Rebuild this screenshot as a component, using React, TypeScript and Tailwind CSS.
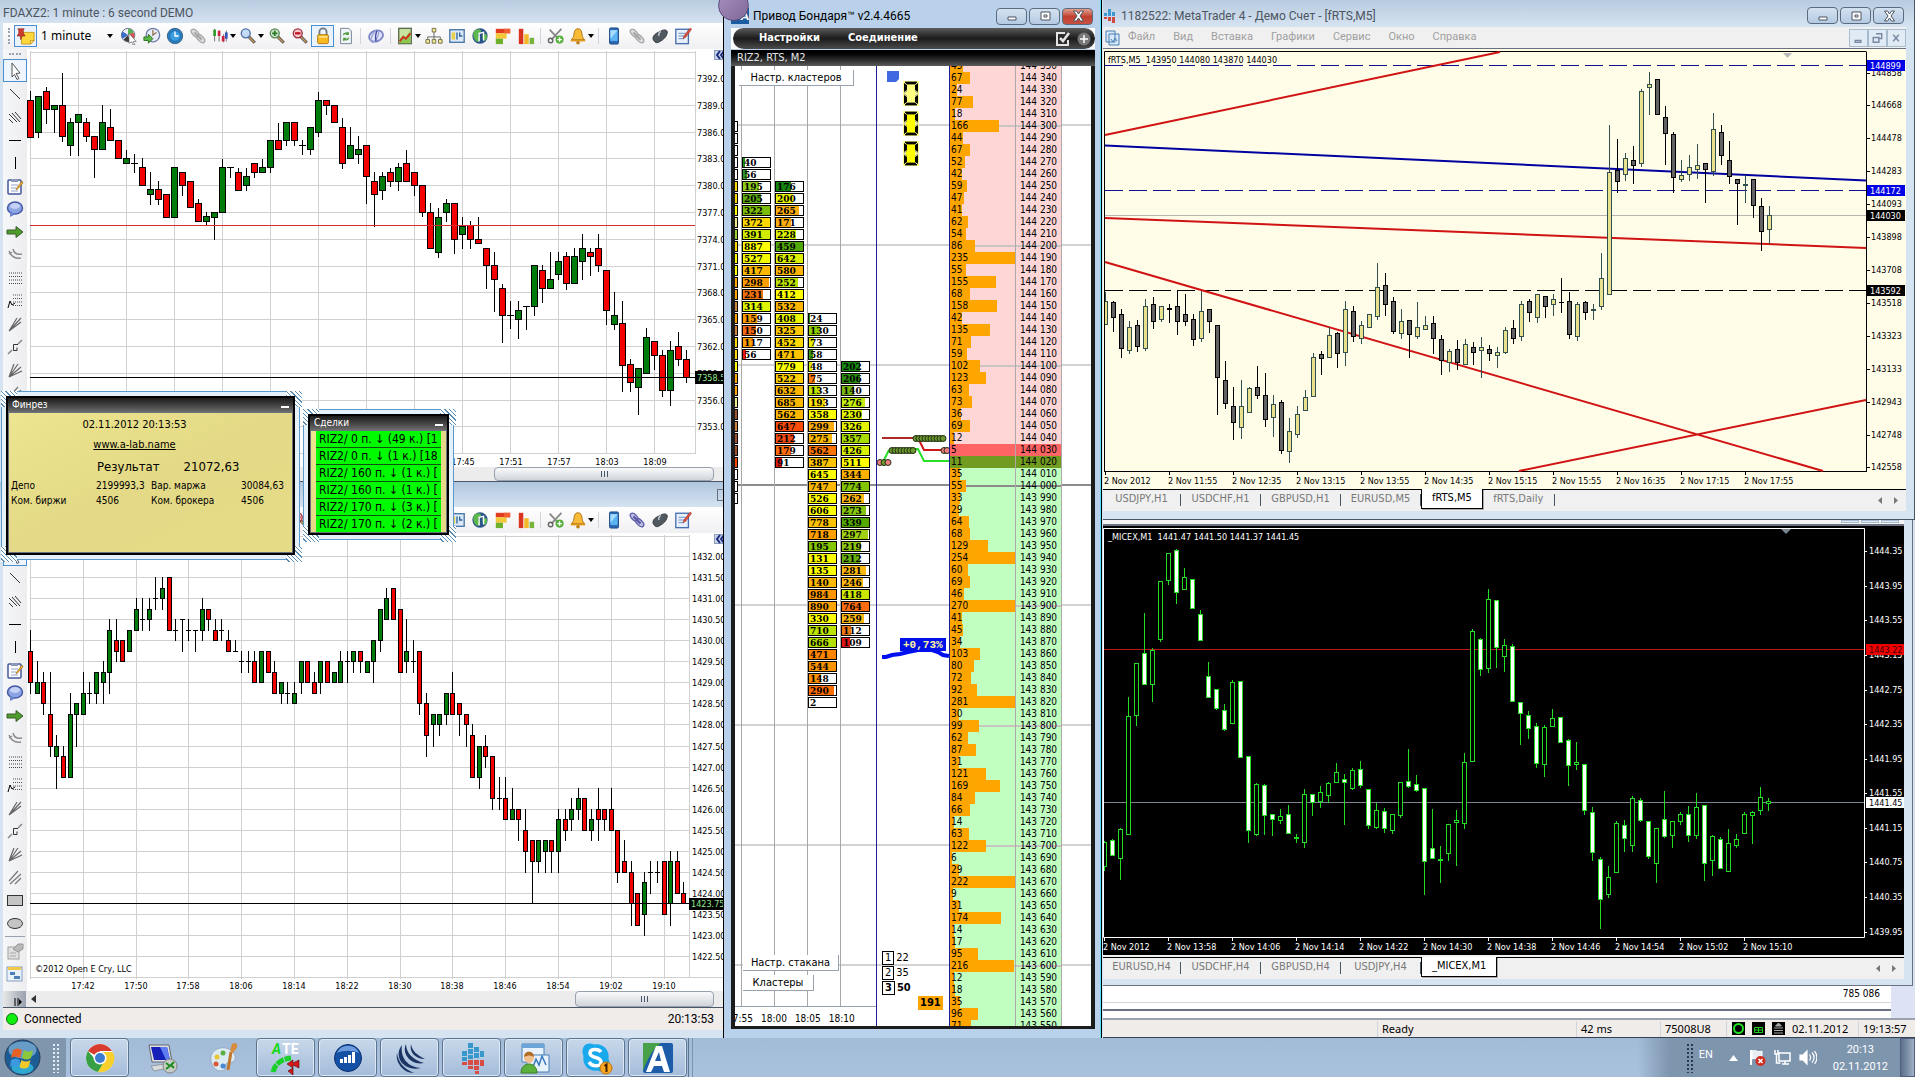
import React from "react";

/* ---------- chart data: high,top,bottom,low,kind ---------- */

const FDAX =
  "91,100,137,137,R 96,96,132,137,G 87,91,109,123,R 105,105,109,132,G 73,105,136,141,R 118,122,145,155,G 114,114,122,155,G 118,122,136,141,R 136,136,149,177,R 105,122,149,149,G 109,127,140,140,R 140,140,158,158,R 150,158,163,163,G 154,163,163,172,D 158,167,185,185,R 172,189,194,204,G 181,189,199,204,R 194,194,217,217,R 167,167,217,217,G 172,172,185,195,R 181,181,207,207,R 199,203,221,221,R 212,216,221,225,G 212,212,217,239,G 159,167,212,212,G 167,167,167,177,D 168,172,190,190,R 168,176,185,190,G 163,163,172,177,R 159,167,172,172,G 140,140,167,172,G 123,140,149,149,R 122,122,140,145,G 122,122,140,145,R 140,145,145,154,D 127,127,149,154,G 92,100,132,136,G 100,100,105,114,R 105,105,122,122,R 118,127,163,168,R 127,145,158,158,G 136,149,154,163,G 145,145,176,203,R 172,181,194,226,R 172,176,190,199,G 168,172,181,186,R 163,167,181,190,G 150,163,181,181,R 172,172,185,195,R 185,185,212,216,R 203,212,248,248,R 208,217,252,257,G 199,203,212,221,G 203,203,239,253,R 217,226,234,248,G 221,225,239,248,R 217,239,243,243,R 248,248,265,288,R 252,265,279,311,R 284,288,315,342,R 301,315,315,328,D 301,310,319,338,G 306,306,306,329,D 265,265,306,315,G 265,270,288,302,R 252,279,288,288,G 252,261,274,279,G 252,256,283,289,R 248,256,283,283,G 234,248,261,279,G 248,252,256,275,R 234,248,265,271,R 270,270,310,324,R 292,315,324,329,G 301,323,365,391,R 359,364,382,391,R 368,368,387,414,G 328,337,373,373,G 341,341,355,369,R 350,355,390,396,R 341,350,390,405,G 332,346,359,365,R 350,359,377,382,R";

/* ticks of 0.25 below 1432.00 */
const ES =
  "7,9,12,13,R 10,12,13,13,G 11,12,14,15,R 11,15,18,19,R 17,18,19,22,G 18,19,21,21,R 13,15,21,21,G 14,14,15,18,G 11,13,15,15,G 12,13,13,14,D 11,11,13,14,G 10,11,12,14,G 6,7,11,13,G 6,8,9,10,R 8,8,10,10,R 7,7,9,9,G 4,5,7,7,G 4,6,6,7,D 4,5,6,7,G 2,4,4,5,D 2,3,4,5,G 2,2,7,7,R 6,7,7,8,D 6,6,6,9,D 6,7,7,8,D 7,7,7,9,D 4,5,7,8,G 5,5,6,7,R 6,7,8,8,R 6,7,7,8,D 7,8,9,9,R 8,9,9,9,D 9,10,10,11,D 9,10,10,11,D 9,10,12,12,R 9,9,12,12,G 9,9,11,11,R 10,11,13,13,R 12,12,13,14,G 12,13,13,14,D 12,13,14,14,G 10,10,12,13,G 10,10,12,12,R 11,12,13,13,R 10,10,12,13,G 10,10,12,12,R 11,11,12,12,G 9,10,12,12,G 9,10,10,12,D 9,9,10,11,G 9,9,10,11,R 10,10,11,11,G 8,8,10,12,G 5,5,8,9,G 3,4,6,6,G 3,3,6,6,R 5,5,11,11,R 6,9,10,11,G 8,10,10,11,D 9,9,14,15,R 13,14,17,19,R 15,15,16,18,G 15,15,16,17,G 13,13,15,16,G 11,13,15,15,R 14,14,15,17,R 15,15,16,18,R 16,17,21,21,R 18,18,21,22,G 17,18,19,20,R 19,19,23,24,R 21,23,23,24,D 21,23,25,25,R 22,24,25,25,G 24,24,25,27,R 24,26,28,30,R 27,27,29,33,R 27,27,29,30,G 27,27,28,30,G 27,27,28,30,R 24,25,28,30,G 24,25,26,27,R 23,24,25,26,G 22,23,24,25,G 23,23,26,26,R 24,25,26,27,G 22,24,25,27,R 24,24,25,26,R 22,24,26,26,R 26,26,30,31,R 27,29,30,30,R 29,30,33,35,R 32,32,35,35,R 30,31,34,36,G 29,30,30,32,D 29,30,30,31,D 29,29,34,34,R 28,29,33,35,G 28,29,32,32,R 31,32,33,33,R";

const FRTS =
  "292,301,324,324,Y 301,302,317,331,K 309,314,348,357,K 321,327,350,353,Y 320,325,346,351,K 299,306,348,350,Y 297,304,321,328,K 306,306,319,321,Y 304,308,309,322,K 291,306,321,334,K 294,314,321,325,K 314,319,339,345,K 291,311,338,341,Y 309,309,321,332,K 325,325,377,414,K 361,380,403,408,K 387,406,422,439,K 380,406,427,438,Y 387,388,412,412,Y 366,387,395,398,K 373,395,419,426,K 395,404,417,436,Y 400,402,450,453,K 418,431,451,462,Y 406,414,434,437,Y 390,397,410,410,Y 353,357,396,396,Y 351,354,358,374,K 327,335,357,357,Y 332,333,353,367,K 301,309,352,365,Y 306,311,336,341,K 321,325,338,343,Y 314,314,327,327,Y 263,287,316,319,Y 273,285,304,315,K 297,301,331,333,K 309,321,333,338,Y 320,320,334,357,K 302,327,336,338,Y 316,325,329,329,Y 316,323,338,353,K 335,339,360,374,K 349,351,362,371,Y 340,349,362,369,K 339,344,364,364,Y 342,347,352,364,K 337,347,350,377,Y 345,349,353,360,K 347,352,355,367,Y 327,330,352,353,Y 320,328,338,343,K 301,304,336,340,Y 299,301,312,321,K 294,294,317,322,Y 296,296,306,317,K 294,299,304,315,Y 278,302,302,312,K 292,301,334,338,K 302,304,336,340,Y 301,302,312,319,K 304,309,310,319,Y 253,278,306,309,Y 125,172,294,294,Y 139,170,181,192,K 153,158,174,180,Y 146,160,165,183,K 89,91,163,166,Y 72,84,87,114,Y 79,79,114,114,K 106,117,133,164,K 132,134,177,192,K 160,175,179,181,Y 155,167,174,180,Y 144,165,169,178,Y 163,163,169,202,K 113,129,171,175,Y 125,132,155,164,K 141,160,176,183,K 179,179,183,224,K 175,184,185,202,Y 179,179,205,217,K 198,206,231,250,K 206,215,229,243,Y";

const MICEX =
  "841,842,866,870,U 839,840,855,855,W 828,829,858,879,U 697,716,834,834,U 663,663,715,725,U 613,653,684,684,W 648,650,684,701,U 581,581,639,641,U 553,553,580,584,U 549,550,592,603,W 568,577,589,589,U 579,579,608,608,W 610,614,640,640,W 662,676,697,697,W 689,689,708,709,W 704,710,729,730,W 680,682,723,723,U 681,681,757,757,W 756,756,830,842,W 783,784,834,835,U 784,785,815,834,W 814,814,819,835,W 809,816,820,823,U 805,814,833,833,W 834,837,838,842,U 789,794,842,847,U 794,794,802,815,W 786,792,801,807,U 782,783,795,802,U 763,772,782,782,U 774,779,782,824,W 768,770,788,789,U 761,769,785,787,W 789,789,825,828,W 803,810,827,828,U 808,811,828,832,W 814,814,830,833,U 782,782,815,817,U 749,781,786,787,W 775,784,790,791,W 788,788,861,894,W 809,848,858,858,W 846,859,860,882,U 824,824,853,860,U 810,820,822,865,U 753,762,823,828,U 629,631,761,761,U 638,639,669,675,W 589,599,668,672,U 600,600,647,667,W 639,645,656,671,U 644,646,701,701,W 702,702,713,744,W 711,715,728,738,W 723,726,763,767,W 725,727,764,776,U 709,718,726,726,U 717,717,742,742,W 739,740,765,785,W 742,762,764,769,U 764,764,810,814,W 807,812,852,860,W 857,859,899,928,W 866,877,894,897,U 821,823,872,872,U 820,825,838,851,W 796,798,845,851,U 798,800,820,821,W 821,821,856,858,W 828,828,863,882,U 791,819,836,837,W 821,821,835,847,U 812,814,821,824,U 806,814,835,841,W 793,807,835,838,U 805,805,863,880,W 835,836,860,875,U 837,839,868,868,W 829,843,871,871,U 834,839,845,847,U 812,814,833,833,U 811,812,815,843,U 787,797,810,814,U 798,801,803,810,U";

const FILL: Record<string, string> = { R: "#f40000", G: "#007c0c", D: "#000", Y: "#e8e08c", K: "#626262", U: "#000", W: "#fff" };
const EDGE: Record<string, string> = { R: "#000", G: "#000", D: "#000", Y: "#2f4f4f", K: "#000", U: "#22dd22", W: "#22dd22" };

type CandleProps = { data: string; x: (i: number) => number; y?: (v: number) => number; half: number };

function Candles({ data, x, y = (v) => v, half }: CandleProps) {
  return (
    <g shapeRendering="crispEdges">
      {data.split(" ").map((row, i) => {
        const p = row.split(",");
        const kind = p[4];
        const [h, t, b, l] = p.slice(0, 4).map((v) => Math.round(y(Number(v))));
        const cx = x(i);
        const w = half * 2 + 1;
        return (
          <g key={i}>
            <rect x={cx} y={h} width={1} height={l - h + 1} fill={EDGE[kind]} />
            <rect x={cx - half} y={t} width={w} height={b - t + 1} fill={EDGE[kind]} />
            {b - t > 1 && <rect x={cx - half + 1} y={t + 1} width={w - 2} height={b - t - 1} fill={FILL[kind]} />}
          </g>
        );
      })}
    </g>
  );
}

const AXIS = "font-['DejaVu_Sans_Condensed','DejaVu_Sans',sans-serif] text-[9px]";
const range = (n: number) => Array.from({ length: n }, (_, i) => i);

/* ---------- left application ---------- */

function FdaxChart() {
  const gy = (i: number) => Math.round(78 + i * 26.8);
  return (
    <svg viewBox="27 49 696 418" preserveAspectRatio="xMinYMin slice" className={`block h-[418px] min-w-0 flex-1 bg-white ${AXIS}`} role="img" aria-label="FDAXZ2">
      <g fill="#d0d0d0" shapeRendering="crispEdges">
        {range(14).map((i) => <rect key={i} x={30} y={gy(i)} width={666} height={1} />)}
        <rect x={30} y={52} width={666} height={1} />
        <rect x={30} y={453} width={666} height={1} />
        {range(14).map((i) => <rect key={i} x={30 + i * 48} y={51} width={1} height={403} />)}
        <rect x={695} y={51} width={1} height={403} />
      </g>
      <Candles data={FDAX} x={(i) => 30 + i * 8} half={3} />
      <rect x={30} y={225} width={665} height={1} fill="#d83030" />
      <rect x={30} y={377} width={665} height={1} fill="#000" />
      {range(14).map((i) => <text key={i} x={697} y={gy(i) + 4}>{(7392 - i * 3).toFixed(1)}</text>)}
      <rect x={695} y={371} width={30} height={13} fill="#000" />
      <text x={697} y={381} fill="#90e890">7358.5</text>
      {["17:45", "17:51", "17:57", "18:03", "18:09"].map((t, i) => <text key={t} x={463 + i * 48} y={465} textAnchor="middle">{t}</text>)}
      <Collapse x={714} y={50} />
    </svg>
  );
}

function Collapse({ x, y }: { x: number; y: number }) {
  return (
    <g>
      <rect x={x + 0.5} y={y + 0.5} width={12} height={9} fill="#c8d4ea" stroke="#8c9cc0" />
      <path d={`M${x + 6} ${y + 1}l-3 4 3 4M${x + 10} ${y + 1}l-3 4 3 4`} fill="none" stroke="#1c2c7c" strokeWidth={2} />
    </g>
  );
}

function EsChart() {
  const gy = (i: number) => Math.round(556 + i * 21.06);
  const gx = (i: number) => Math.round(30 + i * 52.8);
  const times = ["17:42", "17:50", "17:58", "18:06", "18:14", "18:22", "18:30", "18:38", "18:46", "18:54", "19:02", "19:10"];
  return (
    <svg viewBox="27 533 696 458" preserveAspectRatio="xMinYMin slice" className={`block h-[458px] min-w-0 flex-1 bg-white ${AXIS}`} role="img" aria-label="E-mini">
      <g fill="#d0d0d0" shapeRendering="crispEdges">
        {range(20).map((i) => <rect key={i} x={30} y={gy(i)} width={660} height={1} />)}
        <rect x={30} y={536} width={660} height={1} />
        <rect x={30} y={977} width={693} height={1} />
        {range(13).map((i) => <rect key={i} x={gx(i)} y={535} width={1} height={444} />)}
        <rect x={689} y={535} width={1} height={443} />
      </g>
      <Candles data={ES} x={(i) => Math.round(30 + i * 6.6)} y={(v) => 556 + v * 10.53} half={2} />
      <rect x={30} y={903} width={660} height={1} fill="#000" />
      {range(20).map((i) => <text key={i} x={692} y={gy(i) + 4}>{(1432 - i * 0.5).toFixed(2)}</text>)}
      <rect x={689} y={898} width={36} height={12} fill="#000" />
      <text x={691} y={907} fill="#90e890">1423.75</text>
      {times.map((t, i) => <text key={t} x={gx(i + 1)} y={989} textAnchor="middle">{t}</text>)}
      <text x={35} y={972}>©2012 Open E Cry, LLC</text>
      <Collapse x={714} y={534} />
    </svg>
  );
}

function Svg({ children, s = 20 }: { children: React.ReactNode; s?: number }) {
  return <svg viewBox="0 0 20 20" width={s} height={s} fill="none" className="shrink-0">{children}</svg>;
}

const chain = (c: string, d: string) => (
  <g stroke={c} strokeWidth={1.5}>
    <ellipse cx={7} cy={7} rx={5.5} ry={3} transform="rotate(45 7 7)" fill={d} />
    <ellipse cx={13} cy={13} rx={5.5} ry={3} transform="rotate(45 13 13)" fill={d} />
    <path d="M6 6l8 8" strokeWidth={2.5} />
  </g>
);
const lens = (inner: string, rim: string, mark: React.ReactNode) => (
  <>
    <path d="M10.500 10.500l7 7" stroke="#555" strokeWidth={3.500} />
    <path d="M11 11l6 6" stroke="#c89858" strokeWidth={1.500} />
    <circle cx={7.500} cy={7} r={5} fill={inner} stroke={rim} strokeWidth={1.500} />
    {mark}
  </>
);

const ICONS: Record<string, React.ReactNode> = {
  note: <><path d="M5 6h14v9l-4 4H5z" fill="#fbd73c" stroke="#c8981c" /><path d="M15 19v-4h4z" fill="#fff1a0" stroke="#c8981c" /><path d="M1 2h7l-1 2v3l2 3H5.500L4 14V10H0l2-3V4z" fill="#d03c30" stroke="#8c1c14" strokeWidth={0.700} /></>,
  pie: <><circle cx={9} cy={9} r={7.500} fill="#eef0f4" stroke="#5c6880" /><path d="M9 9V2a7 7 0 016 4z" fill="#4cb04c" /><path d="M9 9L3 13a7 7 0 010-8z" fill="#3a6cc8" /><path d="M9 9l-5 5a7 7 0 007 2z" fill="#3c3c3c" /><path d="M9 9l6-3a7 7 0 010 7z" fill="#d84c4c" /><path d="M10 7l8 9-3.500.300 2 3-2 .700-1.500-3.500L10 18z" fill="#fff" stroke="#555" strokeWidth={0.700} /></>,
  clockgo: <><circle cx={11} cy={9} r={7.500} fill="#e8ecfa" stroke="#7080a8" strokeWidth={1.500} /><path d="M11 3v6l4-3" stroke="#806030" strokeWidth={1.200} /><path d="M1 11h5V8l5 5-5 5v-3H1z" fill="#5cb844" stroke="#2c6c20" /></>,
  clock: <><circle cx={10} cy={10} r={8.500} fill="#2c84c8" stroke="#345878" /><circle cx={10} cy={10} r={6} fill="#3c9ce0" stroke="#1c64a4" /><path d="M10 5v5h4" stroke="#fff" strokeWidth={1.500} /></>,
  chaingray: chain("#a8a8a8", "#dedede"),
  chainblue: chain("#5c5ca8", "#c0c4e4"),
  bars: <><path d="M4 2v14M9 5v11M14 8v9M17 4v12" stroke="#444" strokeWidth={0.800} /><path d="M2.500 3h3v7h-3z" fill="#2c9c2c" /><path d="M7.500 4h3v6h-3z" fill="#d02040" /><path d="M12 10h3v6h-3z" fill="#d02040" /><path d="M15.500 6h3v7h-3z" fill="#3454b8" /></>,
  zoom: lens("#c4dcf8", "#5070a8", null),
  zoomin: lens("#cfe4cc", "#5c8c58", <path d="M7.500 4v6M4.500 7h6" stroke="#2c7c2c" strokeWidth={2} />),
  zoomout: lens("#f4c8cc", "#a02c3c", <path d="M4.500 7h6" stroke="#c01020" strokeWidth={2.500} />),
  lock: <><path d="M6 9V5.500a4 4 0 018 0V9" stroke="#707880" strokeWidth={2} /><rect x={4} y={8.500} width={12} height={10} rx={1.500} fill="#f8b820" stroke="#b07810" /><path d="M5 10h10v2H5z" fill="#fde080" /></>,
  refresh: <><path d="M4 1.500h9l3 3v14H4z" fill="#f0f4f8" stroke="#6c7c90" /><path d="M7 9a3.500 3.500 0 016-1M13 12a3.500 3.500 0 01-6 1" stroke="#4c9c3c" strokeWidth={1.500} /><path d="M13 5v4H9zM7 16v-4h4z" fill="#4c9c3c" /></>,
  globe2: <><ellipse cx={10} cy={10} rx={8} ry={6} transform="rotate(-20 10 10)" stroke="#7c84c8" strokeWidth={2} fill="#e0e4f8" /><ellipse cx={9} cy={11} rx={3} ry={7} transform="rotate(25 10 10)" stroke="#9ca4d8" strokeWidth={1.500} /><path d="M11 4c-2 5-2 8-1 12" stroke="#4850a0" strokeWidth={1.500} /></>,
  indic: <><rect x={3} y={1.500} width={14} height={17} fill="#c8e4a0" stroke="#5c6c50" strokeWidth={1.500} /><path d="M4 14l4-5 3 2 5-7v14H4z" fill="#8cc850" /><path d="M4 16l4-5 3 2 5-6" stroke="#d02c20" strokeWidth={2} /></>,
  tree: <><path d="M10 5v5M3 14v-3h14v3M10 10v4" stroke="#60605c" /><path d="M8 1.500h4v4H8zM1 14h4v4H1zM8 14h4v4H8zM15 14h4v4h-4z" fill="#f4ec98" stroke="#6c6440" /></>,
  panel: <><rect x={2} y={3} width={16} height={14} fill="#dceaf8" stroke="#4878a8" strokeWidth={1.500} /><path d="M4 6h4v8H4z" fill="#e8d050" /><path d="M10 6v8M13 6v4h3" stroke="#2c64a0" strokeWidth={1.500} /></>,
  world: <><circle cx={10} cy={10} r={8.500} fill="#2c548c" /><path d="M4 4c3-2 6-2 7 0s-3 3-3 5 3 2 2 5-3 3-5 1-4-8-1-11zM13 8c2-1 5 0 5 3s-3 5-4 4-2-6-1-7z" fill="#5cb84c" /><path d="M9 16V7l5-1v9" stroke="#fff" strokeWidth={1.500} /></>,
  heat1: <><path d="M2 2h16v5H2z" fill="#e03c20" /><path d="M2 7h12v6H2z" fill="#f4c838" /><path d="M2 13h8v6H2z" fill="#6cb02c" /><path d="M11 2h7v5h-7z" fill="#f06030" /></>,
  heat2: <><path d="M2 2h5v17H2z" fill="#d83420" /><path d="M8 8h5v11H8z" fill="#f4b82c" /><path d="M14 12h5v7h-5z" fill="#78b43c" /></>,
  tools: <><path d="M3 3l12 13M16 2L5 14" stroke="#888" strokeWidth={2} /><circle cx={4} cy={15} r={2.500} stroke="#666" strokeWidth={1.500} /><circle cx={14} cy={14} r={4.500} fill="#58b03c" /><path d="M14 11.500v5M11.500 14h5" stroke="#fff" strokeWidth={1.500} /></>,
  bell: <><path d="M10 2c3 0 4 2 4.500 6s1.500 5 3 6h-15c1.500-1 2.500-2 3-6S7 2 10 2z" fill="#f8bc38" stroke="#a86c10" /><path d="M2 14h16v2H2z" fill="#e09818" /><circle cx={10} cy={17.500} r={2} fill="#c07c10" /></>,
  phone: <><rect x={5} y={1} width={10} height={18} rx={1.500} fill="#2c68b4" stroke="#1c4880" /><rect x={6} y={3.500} width={8} height={12} fill="#5cb4f4" /><path d="M6 3.500h8L6 13z" fill="#a8dcff" /></>,
  mouse: <><path d="M3 15c-2-3 0-6 3-8l6-3c4-2 7 0 6 3-1 4-4 7-8 9-3 2-5 2-7-1z" fill="#505860" stroke="#30343c" /><path d="M11 5c-2 1-3 3-2 5" stroke="#c4ccd4" strokeWidth={1.500} /></>,
  form: <><rect x={2} y={2.500} width={14} height={16} fill="#e8f0fc" stroke="#4870b0" strokeWidth={1.500} /><path d="M5 7h8M5 10h8M5 13h6" stroke="#6088c0" /><path d="M18 1l-7 9-1 3 3-1.500 6.500-9z" fill="#e05040" stroke="#902818" strokeWidth={0.600} /></>,
};

const TOOLBAR: [string, boolean][] = [
  ["pie", false], ["clockgo", false], ["clock", false], ["chaingray", false], ["bars", true], ["zoom", true], ["zoomin", false], ["zoomout", false], ["lock", false], ["refresh", false], ["|", false],
  ["globe2", false], ["|", false], ["indic", true], ["tree", false], ["panel", false], ["world", false], ["heat1", false], ["heat2", false], ["|", false], ["tools", false], ["bell", true], ["|", false],
  ["phone", false], ["chaingray", false], ["mouse", false], ["form", false],
];

function Caret() {
  return <span className="border-x-[3px] border-t-[4px] border-x-transparent border-t-black" />;
}

function ChartToolbar({ linked, id }: { linked?: boolean; id: string }) {
  return (
    <div className="flex h-[26px] items-center overflow-hidden bg-gradient-to-b from-white to-[#f0f0f2] pl-[5px]">
      <span className="mr-1 h-4 w-[2px] border-l-2 border-dotted border-gray-400" />
      <button aria-label="Notes" className="flex h-[22px] w-[23px] items-center justify-center border border-[#4a90d0] bg-[#eaf3fc]"><Svg s={18}>{ICONS.note}</Svg></button>
      <div className="relative ml-1">
        <select id={id} aria-label="Period" className="w-[76px] appearance-none bg-transparent font-['Noto_Sans',sans-serif] text-xs leading-5 outline-none"><option>1 minute</option></select>
        <span className="pointer-events-none absolute right-[4px] top-2 flex"><Caret /></span>
      </div>
      {TOOLBAR.map(([name, drop], i) =>
        name === "|" ? (
          <span key={i} className="mx-[3px] h-4 w-px bg-gray-300" />
        ) : (
          <button key={i} aria-label={name} className={`flex h-[22px] shrink-0 items-center justify-center ${drop ? "w-7 gap-[1px]" : "w-[23px]"} ${name === "lock" ? "border border-[#4a90d0] bg-[#eaf3fc]" : ""}`}>
            <Svg s={18}>{ICONS[linked && name === "chaingray" && i > 12 ? "chainblue" : name]}</Svg>
            {drop && <Caret />}
          </button>
        )
      )}
    </div>
  );
}

const SIDE: [string, React.ReactNode][] = [
  ["Cursor", <path d="M7 2l8 10-4 .500 3 5-2 1-2.500-5L7 16z" fill="#fff" stroke="#555" />],
  ["Line", <path d="M5 5l10 10" stroke="#333" />],
  ["Parallel", <path d="M4 7l8 8M7 6l8 9M10 5l6 7M4 12l4 4" stroke="#333" />],
  ["Horizontal", <path d="M4 10.500h12" stroke="#000" />],
  ["Vertical", <path d="M10.500 4v12" stroke="#000" />],
  ["Note", <><rect x={3} y={4} width={13} height={14} rx={1} fill="#fff" stroke="#44589c" strokeWidth={1.500} /><path d="M6 3h7v3H6z" fill="#8c98b8" /><path d="M6 9h7M6 12h5M6 15h7" stroke="#90a4cc" /><path d="M17 5l-6 8 .500 1L18 7z" fill="#f0b030" stroke="#905c10" strokeWidth={0.600} /></>],
  ["Balloon", <><ellipse cx={10} cy={9} rx={7.500} ry={6} fill="#8ca4e4" stroke="#4458a4" strokeWidth={1.500} /><path d="M5 13v5l6-3z" fill="#6c84cc" /><ellipse cx={10} cy={7} rx={5} ry={3} fill="#c4d0f4" /></>],
  ["Arrow", <path d="M2 8h9V4.500l7 5.500-7 5.500V12H2z" fill="#4c9c2c" stroke="#3c5c2c" />],
  ["Arc", <path d="M4 6c2 5 6 8 12 7M8 4c1 4 4 6 9 5M4 9l3-2" stroke="#8c8c8c" strokeWidth={1.500} />],
  ["Levels", <path d="M4 5h13M4 8.500h13M4 12h13M4 15.500h13" stroke="#444" strokeDasharray="1 1" />],
  ["Levels down", <><path d="M8 4h9M8 7.500h9M8 11h9M8 14.500h9" stroke="#555" strokeDasharray="1 1" /><path d="M3 17l2-7 2 4 3-2" stroke="#000" /></>],
  ["Fan", <path d="M4 17L16 4M4 17L16 8M4 17L12 4" stroke="#666" strokeWidth={1.200} />],
  ["Gann", <><path d="M3 17l4-4M13 7l4-4" stroke="#888" strokeWidth={1.500} /><path d="M13 7.500H8.500v6H12v-3" stroke="#333" /></>],
  ["Gann fan", <path d="M4 17L9 4M4 17L13 4M4 17L16 7M4 17L17 11" stroke="#666" strokeWidth={1.200} />],
  ["Channel", <path d="M4 14L13 4M5 17L16 7M10 17l6-6" stroke="#777" strokeWidth={1.200} />],
  ["Rectangle", <rect x={2.500} y={5.500} width={15} height={10} fill="#c4c4c4" stroke="#333" />],
  ["Ellipse", <ellipse cx={10} cy={10.500} rx={7.500} ry={5} fill="#c4c4c4" stroke="#333" />],
  ["Properties", <><rect x={3} y={6} width={11} height={12} fill="#e0e0e0" stroke="#a0a0a0" /><path d="M8 8l5-5h5v5l-5 3z" fill="#b8b8b8" stroke="#989898" /><path d="M5 12h6M5 15h6" stroke="#a8a8a8" /></>],
  ["Objects", <><rect x={2} y={3} width={15} height={14} fill="#e8f0fa" stroke="#88a0c0" /><path d="M3 3h13v3H3z" fill="#f0c84c" /><path d="M5 8h5v3H5zM9 12h6v3H9z" fill="#4c80b8" /></>],
];

function SideBar({ full }: { full?: boolean }) {
  const items = full ? SIDE : SIDE.slice(0, 15);
  return (
    <div className={`w-6 shrink-0 overflow-hidden bg-gradient-to-r from-[#f6f7f9] to-[#ededef] ${full ? "h-[458px]" : "h-[418px]"}`}>
      <div className="mx-auto mb-1 mt-1 h-[2px] w-3 border-t-2 border-dotted border-gray-400" />
      {items.map(([name, art], i) => (
        <React.Fragment key={name}>
          {i === 17 && <hr className="mx-[2px] my-[2px] border-gray-400" />}
          <button aria-label={name} className={`flex h-[23px] w-full items-center justify-center ${i === 0 ? "border border-[#4a90d0] bg-[#eef5fc]" : ""}`}><Svg>{art}</Svg></button>
        </React.Fragment>
      ))}
    </div>
  );
}

function Thumb({ width }: { width: string }) {
  return <div className={`flex ${width} items-center justify-center gap-[2px] rounded-sm border border-gray-400 bg-gradient-to-b from-gray-50 to-gray-300`}><i className="h-[6px] w-px bg-gray-600" /><i className="h-[6px] w-px bg-gray-600" /><i className="h-[6px] w-px bg-gray-600" /></div>;
}

/* floating panels with hatched resize corners */
function Floating({ place, title, children }: { place: string; title: string; children: React.ReactNode }) {
  const hatch = "absolute h-4 w-4 bg-[repeating-linear-gradient(45deg,#fff_0,#fff_2px,#5a8cb4_2px,#5a8cb4_3px)]";
  return (
    <section className={`absolute z-10 flex flex-col border border-[#5c98c8] bg-[#e4f0fa] p-1 font-['DejaVu_Sans_Condensed',sans-serif] ${place}`}>
      <span className={`${hatch} -left-[1px] -top-[1px]`} /><span className={`${hatch} -right-[3px] -top-[1px]`} />
      <span className={`${hatch} -bottom-[3px] -left-[1px]`} /><span className={`${hatch} -bottom-[3px] -right-[3px]`} />
      <div className="relative flex min-h-0 flex-1 flex-col border-2 border-black bg-gray-500">
        <header className="flex h-[14px] shrink-0 items-center justify-between bg-gradient-to-b from-[#1c1c1c] to-[#6c6c6c] px-1 text-[10px] text-white">{title}<i className="mt-1 h-[2px] w-2 bg-white" /></header>
        <div className="m-px min-h-0 flex-1 overflow-hidden bg-gradient-to-br from-[#eee590] via-[#e3d986] to-[#e6dc88]">{children}</div>
      </div>
    </section>
  );
}

function LeftApp() {
  const deals = ["RIZ2/ 0 п. ↓ (49 к.) [1", "RIZ2/ 0 п. ↓ (1 к.) [18", "RIZ2/ 160 п. ↓ (1 к.) [", "RIZ2/ 160 п. ↓ (1 к.) [", "RIZ2/ 170 п. ↓ (3 к.) [", "RIZ2/ 170 п. ↓ (2 к.) ["];
  return (
    <main className="relative flex min-w-0 flex-col overflow-hidden bg-[#d6e3f1] pl-[3px] font-['Roboto','Noto_Sans',sans-serif] text-xs text-black">
      <h1 className="-ml-[3px] h-[23px] bg-gradient-to-b from-[#b8cbe0] to-[#d6e3f1] pl-[3px] pt-1 leading-[19px] text-[#4c5560]">FDAXZ2: 1 minute : 6 second DEMO</h1>
      <ChartToolbar id="period-a" />
      <div className="flex"><SideBar /><FdaxChart /></div>
      <div className="flex h-[14px] justify-end bg-[#ececec] pr-[9px]"><Thumb width="w-[220px]" /></div>
      <div className="h-px bg-gray-600" />
      <div className="-ml-[3px] flex h-[25px] items-center justify-end bg-gradient-to-b from-[#b0c6de] to-[#d6e3f1]"><span className="h-3 w-[6px] border border-r-0 border-gray-500" /></div>
      <ChartToolbar id="period-b" linked />
      <div className="flex"><SideBar full /><EsChart /></div>
      <div className="flex h-4 items-stretch bg-[#ececec] pr-[9px]">
        <div className="flex w-[23px] items-end justify-end bg-gradient-to-r from-[#e8e8e8] to-gray-400 pr-1"><svg width="8" height="10" viewBox="0 0 8 10"><path d="M1 1v8M4 1v8" stroke="#000" /><path d="M5 2l3 3-3 3z" /></svg></div>
        <svg className="ml-[5px] mt-1" width="5" height="8" viewBox="0 0 5 8"><path d="M5 0v8L0 4z" fill="#333" /></svg>
        <div className="flex-1" />
        <Thumb width="w-[139px]" />
      </div>
      <div className="h-px bg-gray-600" />
      <footer className="flex h-[22px] items-center bg-[#f0ecea] pl-[3px] pr-[9px]">
        <span className="mr-[6px] h-3 w-3 rounded-full border border-[#107010] bg-[#10f010]" />
        <span>Connected</span>
        <span className="ml-auto">20:13:53</span>
      </footer>
      <div className="h-2" />
      <Floating title="Финрез" place="left-[1px] top-[391px] h-[169px] w-[299px]">
        <div className="px-[2px] pt-1 text-[10px] leading-[15px]">
          <p className="pr-8 text-center text-[11px]">02.11.2012 20:13:53</p>
          <p className="mt-[5px] pr-8 text-center text-[11px]"><a href="#lab" className="underline">www.a-lab.name</a></p>
          <p className="mt-1 flex gap-6 pl-[86px] text-[13px] leading-[22px]"><span>Результат</span><span>21072,63</span></p>
          <dl className="grid grid-cols-[85px_55px_90px_1fr]">
            <dt>Депо</dt><dd>2199993,3</dd><dt>Вар. маржа</dt><dd>30084,63</dd>
            <dt>Ком. биржи</dt><dd>4506</dd><dt>Ком. брокера</dt><dd>4506</dd>
          </dl>
        </div>
      </Floating>
      <Floating title="Сделки" place="left-[303px] top-[409px] h-[131px] w-[151px]">
        <ul className="mx-[5px] text-xs leading-4">
          {deals.map((d, i) => <li key={i} className="h-[17px] whitespace-nowrap border-b border-[#105010] bg-[#00fb00] pl-[3px]">{d}</li>)}
        </ul>
      </Floating>
    </main>
  );
}

/* ---------- order book window ---------- */

const VOLUMES = [45, 67, 24, 77, 18, 166, 44, 67, 52, 42, 59, 47, 41, 62, 54, 86, 235, 55, 155, 68, 158, 42, 135, 71, 59, 102, 123, 63, 73, 36, 69, 12, 5, 11, 35, 55, 33, 29, 64, 68, 129, 254, 60, 69, 46, 270, 41, 45, 34, 103, 80, 72, 92, 281, 30, 99, 62, 87, 31, 121, 169, 84, 66, 14, 63, 122, 6, 29, 222, 9, 31, 174, 14, 17, 95, 216, 12, 18, 35, 96, 71];

/* volume:fill percent:colour */
const CLUSTERS: [number, string][] = [
  [8, "40:6:1a8a1a 56:15:2d962d 195:60:8fcc1c 205:65:5cab10 322:100:7cbc08 372:100:ffd800 391:100:d0ec00 887:100:ffff00 527:100:f4fc00 417:100:ffb800 298:95:ff9c00 231:75:f07010 314:100:dcf400 159:50:ff9c00 150:48:f46810 117:37:ff9c00 56:12:f01414"],
  [10, "176:56:158410 200:63:e8f400 265:84:ffac10 171:54:ffac10 228:73:dcf400 459:100:52a808 642:100:dcf000 580:100:ffb400 252:80:bce000 412:100:ffff00 532:100:ffb400 408:100:e8f400 325:100:ffc800 452:100:ffd800 471:100:ffc400 779:100:ffff00 522:100:ffcc00 632:100:ffb400 685:100:ffb800 562:100:ffb800 647:100:ff4c08 212:67:f44c14 179:57:ff6c10 91:24:e01c10"],
  [21, "24:4:1a8a1a 130:40:8fcc00 73:20:e8f000 58:14:3c9c10 48:10:d8e800 75:22:ff7c10 133:42:c4e400 193:60:ffe000 358:100:ffff00 299:94:ffac10 275:87:ffb800 562:100:ff7400 387:100:ffc400 645:100:ffff00 747:100:ffb800 526:100:ffff00 606:100:ffff00 778:100:ffc000 718:100:ffa000 195:100:84c400 131:100:fffc00 135:100:ffff00 140:100:ffb800 984:100:ff9400 890:100:ffa400 330:100:ffff00 710:100:bce400 666:100:b4e000 471:100:ff8400 544:100:ff9400 148:46:ff9000 290:94:ff6c00 2:0:ffffff"],
  [25, "202:65:188810 206:66:2c8c10 140:44:78b810 276:87:c4f010 230:73:e0f400 326:100:e4f400 357:100:a8dc00 426:100:d8f000 511:100:fffc00 344:100:ffb000 774:100:84c400 262:83:ffb810 273:88:84c410 339:100:54a800 297:95:a0d010 219:70:8cc410 212:67:68b010 281:90:ffb810 246:78:ffb810 418:100:cce800 764:100:ff6c10 259:82:ffb810 112:32:ec7814 109:31:e01414"],
];
const EDGE_CLUSTER = "white white white white white gold gold yellow khaki yellowgreen gold yellow yellow orange orange peru orange peru gold gold yellow orange orange khaki sienna peru sienna sienna orangered white white white".split(" ");

function GridLines() {
  return (
    <div className="pointer-events-none absolute inset-0 -top-[1px]">
      {range(8).map((i) => <div key={i} className={`mb-[118px] h-[2px] first:mt-[59px] ${i === 3 ? "bg-[#8c8c8c]" : "bg-[#d2d2d2]"}`} />)}
    </div>
  );
}

function ClusterPanel() {
  const label = "absolute border-b border-r border-gray-400 bg-white text-[11px] leading-[15px]";
  return (
    <div className="relative w-[141px] shrink-0 bg-white">
      <GridLines />
      <div className="relative flex">
        <div className="h-[940px] w-[6px] pt-[55px]">
          {EDGE_CLUSTER.map((c, i) => <div key={i} className="mb-px h-[11px] w-[3px] border-y border-r border-black" style={{ backgroundColor: c }} />)}
        </div>
        {CLUSTERS.map(([row, cells], c) => (
          <div key={c} className="h-[940px] w-[33px] border-l border-[#a8a8a8] font-['DejaVu_Serif_Condensed','DejaVu_Serif',serif] text-[10px] font-bold leading-[9px]" style={{ paddingTop: row * 12 - 5 }}>
            {cells.split(" ").map((s, i) => {
              const [v, w, col] = s.split(":");
              return (
                <div key={i} className="relative mb-px h-[11px] w-[29px] border border-black bg-white">
                  <div className="absolute inset-y-0 left-0" style={{ width: `${w}%`, backgroundColor: `#${col}` }} />
                  <span className="relative pl-px">{v}</span>
                </div>
              );
            })}
          </div>
        ))}
      </div>
      <div className="relative flex h-5 gap-[8px] border-t border-gray-400 pt-1 text-[10px]">
        <span className="-ml-[8px]">17:55</span><span>18:00</span><span>18:05</span><span>18:10</span>
      </div>
      <button className={`${label} left-1 top-1 h-4 w-[115px]`}>Настр. кластеров</button>
      <button className={`${label} left-2 top-[889px] h-4 w-[96px]`}>Настр. стакана</button>
      <button className={`${label} left-2 top-[909px] h-4 w-[71px]`}>Кластеры</button>
    </div>
  );
}

function TradePanel() {
  const zero = (y: number, fill: string) => (
    <g key={y}>
      <rect x={903} y={y} width={16} height={25} fill="#ffff90" />
      <rect x={906} y={y + 3} width={9} height={19} fill={fill} />
      <path d={`M905 ${y + 1}h12l-2 2h-8zM905 ${y + 24}h12l-2-2h-8z`} fill="#000" stroke="#000" strokeWidth={0.800} />
      <path d={`M904 ${y + 2}v9l3-2v-5zM904 ${y + 23}v-9l3 2v5zM918 ${y + 2}v9l-3-2v-5zM918 ${y + 23}v-9l-3 2v5z`} fill="#000" />
      <path d={`M904 ${y + 12}l3-2M904 ${y + 13}l3 2M918 ${y + 12}l-3-2M918 ${y + 13}l-3 2`} stroke="#999" />
    </g>
  );
  const sizes = [["1", "22"], ["2", "35"], ["3", "50"]];
  return (
    <div className="relative min-w-0 flex-1 border-x border-[#1c1c9c] bg-white">
      <GridLines />
      <svg viewBox="877 66 72 880" preserveAspectRatio="xMinYMin slice" className="relative block h-[880px] w-full">
        <path d="M887 71h12v8l-3 3h-9z" fill="#4068e0" />
        {zero(81, "#ffff80")}{zero(111, "#ffff00")}{zero(141, "#ffff00")}
        <path d="M882 438h34" stroke="#b02828" strokeWidth={2} />
        <path d="M919 440l5 10h20" stroke="#d01818" strokeWidth={2} fill="none" />
        <path d="M884 460l5-10M915 449h3l6 12h26" stroke="#28e028" strokeWidth={2} fill="none" />
        <g stroke="#202c10" strokeWidth={1}>
          {range(10).map((i) => <circle key={i} cx={916 + i * 3} cy={438.500} r={3} fill="#6c9830" />)}
          {range(8).map((i) => <circle key={i} cx={892 + i * 3} cy={450.500} r={3} fill="#6c9830" />)}
          <circle cx={880} cy={462.500} r={3} fill="#f08080" /><circle cx={884} cy={462.500} r={3} fill="#6c9830" /><circle cx={888} cy={462.500} r={3} fill="#f08080" />
          <circle cx={944} cy={450.500} r={3} fill="#f08080" /><circle cx={947} cy={450.500} r={3} fill="#f08080" />
        </g>
        <path d="M882 657l4 0 6-2 8-1 8-2 10-2h14l6 2 5 3 6 1" stroke="#0010f0" strokeWidth={4} fill="none" />
        <rect x={900} y={638} width={46} height={13} fill="#0010e8" />
        <text x={903} y={648} fill="#fff8a0" fontWeight="bold" className="font-['Liberation_Mono',monospace] text-[11px]">+0,73%</text>
      </svg>
      <div className="relative pl-[5px] pt-[5px] text-[11px] leading-3">
        {sizes.map(([k, v]) => <p key={k} className={`mb-px flex gap-[2px] ${k === "3" ? "font-bold" : ""}`}><span className="border border-black px-[2px]">{k}</span><span className="pt-px">{v}</span></p>)}
        <p className="ml-9 flex"><span className="bg-[#ffa500] px-[2px] text-[11px] font-bold leading-[14px]">191</span></p>
      </div>
    </div>
  );
}

function OrderBook() {
  return (
    <table className="-mt-[6px] block w-[112px] shrink-0 text-[10px] leading-3">
      <tbody className="block">
        {VOLUMES.map((v, i) => {
          const price = 144350 - i * 10;
          const tone = price === 144030 ? "bg-[#ff6464]" : price === 144020 ? "bg-[#729b22]" : price > 144030 ? "bg-[#ffd6d6]" : "bg-[#c0ffc0]";
          const barTone = price === 144030 ? "bg-[#ff6464]" : price === 144020 ? "bg-[#729b22]" : "bg-[#ffa500]";
          const line = price === 144000 ? "bg-[#8c8c8c]" : "bg-[#c8c4c4]";
          const rule = price % 100 === 0 ? <span className={`absolute inset-x-0 top-[5px] h-[2px] ${line}`} /> : null;
          return (
            <tr key={price} className={`flex h-3 ${tone}`}>
              <td className="relative w-[65px] p-0">
                {rule}
                <span className={`absolute inset-y-0 left-0 ${barTone}`} style={{ width: `${Math.min(100, v / 2.2)}%` }} />
                <span className="relative pl-px">{v}</span>
              </td>
              <td className="relative flex-1 border-x border-[#b0a8a8] p-0 text-center">{rule}<span className="relative">{`${Math.floor(price / 1000)} ${String(price % 1000).padStart(3, "0")}`}</span></td>
            </tr>
          );
        })}
      </tbody>
    </table>
  );
}

const WIN_ART = [
  <path d="M6 10h8v3H6z" />,
  <path d="M6 5h9v8H6zM9 8h3v2H9z" />,
  <path d="M5.500 4h3l2 3 2-3h3l-3.500 5 3.500 5h-3l-2-3-2 3h-3L9 9z" />,
];

function WindowButtons({ active }: { active?: boolean }) {
  return (
    <div className="flex gap-[2px]">
      {["Minimize", "Maximize", "Close"].map((n, i) => (
        <button key={n} aria-label={n} className={`flex h-[17px] w-[31px] items-center justify-center rounded-sm border border-[#5c6c80] ${active && i === 2 ? "bg-gradient-to-b from-[#e0a090] via-[#c04030] to-[#c85040]" : "bg-gradient-to-b from-[#d4e2f0] to-[#b4cae2]"}`}>
          <svg width="20" height="18" viewBox="0 0 20 18" fill="#fff" stroke="#4c5460" strokeWidth={1}>{WIN_ART[i]}</svg>
        </button>
      ))}
    </div>
  );
}

function BookWindow() {
  return (
    <section className="relative flex min-w-0 flex-col border-x border-black bg-[#b9d1ea] pl-[7px] pr-[6px] font-['DejaVu_Sans_Condensed',sans-serif] text-black shadow-[inset_-1px_0_0_#50e0f8]">
      <span className="absolute -left-[6px] -top-[10px] z-20 h-[31px] w-[31px] rounded-full border border-[#5c4c7c] bg-gradient-to-br from-[#a890c0] to-[#806898]" />
      <header className="flex h-7 items-center pr-[2px] pt-1 font-['Roboto','Noto_Sans',sans-serif] text-xs">
        <span className="mr-1 flex h-4 w-[18px] justify-end bg-[#1c5ca0] text-right text-[13px] font-bold leading-4 text-white">A</span>
        <h2 className="flex-1 whitespace-nowrap">Привод Бондаря™ v2.4.4665</h2>
        <WindowButtons active />
      </header>
      <div className="bg-white">
        <nav className="ml-[2px] flex h-[21px] items-center gap-7 rounded-full bg-gradient-to-b from-[#5c5c5c] via-[#1c1c1c] to-[#4c4c4c] pl-[26px] pr-1 text-[11px] font-bold text-white">
          <button>Настройки</button><button>Соединение</button>
          <span className="ml-auto flex items-center gap-[6px]">
            <svg width="16" height="16" viewBox="0 0 16 16" fill="none" stroke="#e4e4e4" strokeWidth={2}><path d="M10 2H2v12h11V9" /><path d="M5 7l3 3 6-8" strokeWidth={2.500} /></svg>
            <svg width="14" height="14" viewBox="0 0 14 14"><circle cx={7} cy={7} r={6.500} fill="#777" /><path d="M7 3v8M3 7h8" stroke="#fff" strokeWidth={1.500} /></svg>
          </span>
        </nav>
      </div>
      <div className="mt-px h-4 bg-gradient-to-b from-black to-[#5c5c5c] pl-[6px] text-[11px] leading-4 text-gray-200">RIZ2, RTS, M2</div>
      <div className="flex h-[963px] overflow-hidden border-x-4 border-b-[3px] border-[#1c1c1c] bg-white">
        <ClusterPanel />
        <TradePanel />
        <OrderBook />
        <div className="relative w-[29px] shrink-0"><GridLines /></div>
      </div>
    </section>
  );
}

/* ---------- MetaTrader windows ---------- */

type Label = [number, string];
const FRTS_Y: Label[] = [[73, "144858"], [105, "144668"], [138, "144478"], [171, "144283"], [204, "144093"], [237, "143898"], [270, "143708"], [303, "143518"], [336, "143323"], [369, "143133"], [402, "142943"], [435, "142748"], [467, "142558"]];
const FRTS_X = ["2012", "11:55", "12:35", "13:15", "13:55", "14:35", "15:15", "15:55", "16:35", "17:15", "17:55"];
const MICEX_Y: Label[] = [[551, "1444.35"], [586, "1443.95"], [620, "1443.55"], [655, "1443.15"], [690, "1442.75"], [724, "1442.35"], [759, "1441.95"], [793, "1441.55"], [828, "1441.15"], [862, "1440.75"], [897, "1440.35"], [932, "1439.95"]];
const MICEX_X = ["2012", "13:58", "14:06", "14:14", "14:22", "14:30", "14:38", "14:46", "14:54", "15:02", "15:10"];

function Tag({ y, text, bg, fg, x = 1867, w = 38 }: { y: number; text: string; bg: string; fg: string; x?: number; w?: number }) {
  return (
    <g>
      <rect x={x} y={y - 5} width={w} height={11} fill={bg} />
      <text x={x + 3} y={y + 4} fill={fg}>{text}</text>
    </g>
  );
}

function FrtsChart() {
  return (
    <svg viewBox="1103 49 803 440" preserveAspectRatio="xMinYMin slice" className={`block h-[440px] w-full bg-[#fffde8] ${AXIS}`} role="img" aria-label="fRTS,M5">
      <path d="M1104.500 471.500V51.500H1866.500M1104 471.500H1867M1866.500 52V472" stroke="#000" fill="none" />
      <path d="M1105 65.500H1866M1105 190.500H1866" stroke="#101090" strokeDasharray="18 6" />
      <path d="M1105 290.500H1866" stroke="#000" strokeDasharray="18 6" />
      <path d="M1105 215.500H1866" stroke="#b4b4b0" />
      <path d="M1105 145.500L1866 180.500" stroke="#0000a0" strokeWidth={2} />
      <path d="M1105 135L1500 52M1105 218L1866 248M1105 262L1823 471M1519 471L1866 400" stroke="#d01414" strokeWidth={2} fill="none" />
      <svg x={1105} y={49} width={761} height={423} viewBox="1105 49 761 423"><Candles data={FRTS} x={(i) => 1105 + i * 8} half={2} /></svg>
      <path d="M1783 53h9l-4.500 5z" fill="#b8b8b8" />
      <text x={1108} y={63} xmlSpace="preserve">fRTS,M5  143950 144080 143870 144030</text>
      {FRTS_Y.map(([y, t]) => <g key={t}><rect x={1867} y={y} width={3} height={1} /><text x={1871} y={y + 3}>{t}</text></g>)}
      <Tag y={65} text="144899" bg="#0000e8" fg="#fff" /><Tag y={190} text="144172" bg="#0000e8" fg="#fff" />
      <Tag y={215} text="144030" bg="#000" fg="#fff" /><Tag y={290} text="143592" bg="#000" fg="#fff" />
      {FRTS_X.map((t, i) => <g key={t}><rect x={1105 + i * 64} y={472} width={1} height={3} /><text x={1104 + i * 64} y={484}>2 Nov {t}</text></g>)}
    </svg>
  );
}

function MicexChart() {
  return (
    <svg viewBox="1103 526 801 429" preserveAspectRatio="xMinYMin slice" className={`block h-[429px] w-full bg-black ${AXIS}`} fill="#fff" role="img" aria-label="_MICEX,M1">
      <path d="M1103.500 937.500V528.500H1864.500V937.500z" stroke="#fff" fill="none" />
      <path d="M1104 649.500H1864" stroke="#b81818" />
      <path d="M1104 802.500H1864" stroke="#788490" />
      <svg x={1104} y={526} width={760} height={411} viewBox="1104 526 760 411"><Candles data={MICEX} x={(i) => 1104 + i * 8} half={2} /></svg>
      <path d="M1781 529h10l-5 5z" fill="#788490" />
      <text x={1108} y={540} xmlSpace="preserve">_MICEX,M1  1441.47 1441.50 1441.37 1441.45</text>
      {MICEX_Y.map(([y, t]) => <g key={t}><rect x={1865} y={y} width={2} height={1} /><text x={1869} y={y + 3}>{t}</text></g>)}
      <Tag x={1866} y={649} text="1443.22" bg="#f00000" fg="#400000" /><Tag x={1866} y={802} text="1441.45" bg="#fff" fg="#000" />
      {MICEX_X.map((t, i) => <g key={t}><rect x={1104 + i * 64} y={938} width={1} height={3} /><text x={1103 + i * 64} y={950}>2 Nov {t}</text></g>)}
    </svg>
  );
}

function Tabs({ items, active }: { items: string[]; active: string }) {
  return (
    <div role="tablist" className="flex h-[22px] items-start border-t border-black bg-[#f0f0f0] text-[11px] text-[#787878]">
      {items.map((t) => t === active ? (
        <button key={t} role="tab" aria-selected className="-mt-px h-5 border border-t-0 border-black bg-white px-[10px] text-black shadow-[1px_1px_0_#aaa]">{t}</button>
      ) : (
        <button key={t} role="tab" className="flex h-[19px] w-20 items-center justify-center first:w-[78px] last-of-type:w-[72px]"><span className="flex-1">{t}</span><i className="h-3 w-px bg-gray-600" /></button>
      ))}
      <span className="ml-auto mr-2 mt-[7px] flex gap-3"><svg width="4" height="7"><path d="M4 0v7L0 3.500z" fill="#777" /></svg><svg width="4" height="7"><path d="M0 0v7l4-3.500z" fill="#777" /></svg></span>
    </div>
  );
}

function MetaTrader() {
  const menu = ["Файл", "Вид", "Вставка", "Графики", "Сервис", "Окно", "Справка"];
  return (
    <section className="flex min-w-0 flex-col overflow-hidden bg-[#d6e3f1] pl-px font-['DejaVu_Sans_Condensed',sans-serif] text-black">
      <div className="border-r border-gray-600 pr-2">
        <header className="-mr-2 flex h-[27px] items-center bg-gradient-to-b from-[#b8cbe0] to-[#d6e3f1] pr-[10px] pt-1 font-['Roboto','Noto_Sans',sans-serif] text-xs text-[#4c5560]">
          <svg className="ml-[1px] mr-[5px]" width="12" height="14" viewBox="0 0 12 14"><path d="M0 4h3v3H0zM4 0h3v7H4zM8 3h3v4H8z" fill="#3c98d0" /><path d="M0 8h3v2H0zM4 8h3v4H4zM8 8h3v6H8z" fill="#d04840" /></svg>
          <h2 className="flex-1">1182522: MetaTrader 4 - Демо Счет - [fRTS,M5]</h2>
          <WindowButtons />
        </header>
        <nav className="flex h-[21px] items-center bg-[#f0f0f0] font-['Roboto','Noto_Sans',sans-serif] text-[11px] text-[#a0a0a0]">
          <svg className="ml-[2px] mr-2 shrink-0" width="15" height="16" viewBox="0 0 15 16" fill="#d8e8f8" stroke="#4880b4"><path d="M1 1h9v11H1zM4 4h10v11H4z" /><path d="M6 9l2 3 2-4 2 3" fill="none" /></svg>
          <div className="flex gap-[18px]">{menu.map((m) => <button key={m}>{m}</button>)}</div>
          <div className="ml-auto flex">
            {["M5 11h6v2H5z", "M4 8h6v5H4zM7 4h6v5H10", "M5 5l6 7M11 5l-6 7"].map((d) => <button key={d} aria-label="mdi" className="h-[18px] w-[19px] border border-[#a8bcd0] bg-[#e0ebf5]"><svg width="16" height="16" viewBox="0 0 16 17" fill="none" stroke="#7888a0" strokeWidth={1.500}><path d={d} /></svg></button>)}
          </div>
        </nav>
        <div className="h-px bg-gray-500" />
        <FrtsChart />
        <Tabs items={["USDJPY,H1", "USDCHF,H1", "GBPUSD,H1", "EURUSD,M5", "fRTS,M5", "fRTS,Daily"]} active="fRTS,M5" />
        <div className="h-2" />
      </div>
      <div className="h-px bg-gray-600" />
      <div className="mr-[2px] border-b border-r border-gray-500 pr-2">
        <div className="flex h-[6px] justify-end border-b-2 border-gray-500 bg-[#f4f4f4] pr-1"><i className="mx-px h-[3px] w-[18px] border border-[#a8bcd0] bg-[#e0ebf5]" /><i className="mx-px h-[3px] w-[18px] border border-[#a8bcd0] bg-[#e0ebf5]" /><i className="mx-px h-[3px] w-[18px] border border-[#a8bcd0] bg-[#e0ebf5]" /></div>
        <MicexChart />
        <div className="h-[2px] bg-[#f0f0f0]" />
        <Tabs items={["EURUSD,H4", "USDCHF,H4", "GBPUSD,H4", "USDJPY,H4", "_MICEX,M1"]} active="_MICEX,M1" />
        <div className="h-[6px]" />
      </div>
      <div className="flex h-8 bg-[#dde2f4]">
        <div className="mr-6 flex flex-1 flex-col bg-white">
          <p className="h-[17px] border-b border-gray-300 pr-[11px] text-right text-[10px] leading-4">785 086</p>
          <div className="mt-[6px] h-[2px] bg-gray-500" />
        </div>
      </div>
      <footer className="flex h-[19px] items-center border-t-2 border-gray-400 bg-[#f0ecea] font-['Noto_Sans',sans-serif] text-[11px] leading-4">
        <span className="flex-1" />
        <span className="w-[199px] border-l border-gray-300 pl-1">Ready</span>
        <span className="w-[84px] border-l border-gray-300 pl-1">42 ms</span>
        <span className="w-[66px] border-l border-gray-300 pl-1">75008U8</span>
        <span className="flex w-[132px] items-center gap-[7px] border-l border-gray-300 pl-[5px]">
          <svg width="13" height="13" viewBox="0 0 13 13"><rect width="13" height="13" /><circle cx={6.500} cy={6.500} r={4.500} fill="none" stroke="#20e020" strokeWidth={2} /></svg>
          <svg width="13" height="13" viewBox="0 0 13 13"><rect width="13" height="13" /><path d="M2.500 5.500h8v5h-8zM6.500 5.500v5M2.500 8h8" fill="none" stroke="#20d020" /></svg>
          <svg width="13" height="13" viewBox="0 0 13 13"><rect width="13" height="13" /><path d="M6.500 1l3 3h-6zM2 6h9M2 8.500h9M2 11h9" fill="#aaa" stroke="#aaa" /></svg>
          <span>02.11.2012</span>
        </span>
        <span className="w-[57px] border-l border-gray-300 pl-1">19:13:57</span>
      </footer>
      <div className="h-px bg-gray-700" />
    </section>
  );
}

/* ---------- taskbar ---------- */

const I = ({ children }: { children: React.ReactNode }) => <svg width="34" height="34" viewBox="0 0 34 34" fill="none">{children}</svg>;

const APPS: [string, boolean, React.ReactNode][] = [
  ["Chrome", true, <I><circle cx={17} cy={17} r={14} fill="#fff" /><path d="M17 17L4.900 10A14 14 0 0129.100 10L17 10z" fill="#d83c2c" /><path d="M4.900 10A14 14 0 0015 30.900L21.500 21 17 17 11 17z" fill="#38a044" /><path d="M29.800 11H19l3 8-7 12A14 14 0 0029.800 11z" fill="#f8d02c" /><circle cx={17} cy={17} r={6.500} fill="#fff" /><circle cx={17} cy={17} r={5} fill="#3c7cd0" /></I>],
  ["Remote Desktop", false, <I><path d="M4 4h20l3 17H7z" fill="#e0e0e0" stroke="#606870" /><path d="M6 6h16l3 13H9z" fill="#1420b8" /><path d="M15 6h7l3 13h-4z" fill="#5c7cf0" /><path d="M6 25l14-2 3 4-14 3z" fill="#d8dce0" stroke="#90989c" /><circle cx={25} cy={25} r={7} fill="#c8ccc8" stroke="#808480" /><path d="M21 22l4 3-4 3M29 21l-3 3 3 3" stroke="#1c8c1c" strokeWidth={2} /></I>],
  ["Paint", false, <I><path d="M4 20C2 12 10 5 19 7s11 10 8 13-6 0-8 3 0 7-5 7S5 26 4 20z" fill="#dceaf4" stroke="#98acc0" /><circle cx={10} cy={16} r={2.500} fill="#e8c430" /><circle cx={16} cy={12} r={2.500} fill="#58b040" /><circle cx={9} cy={23} r={2.500} fill="#d85838" /><circle cx={16} cy={25} r={2.500} fill="#4888d0" /><path d="M25 3c4-3 7 1 4 5l-3 4-3-2z" fill="#d88c40" /><path d="M24 11l-3 18" stroke="#c07830" strokeWidth={3} /></I>],
  ["ATE", true, <I><text x={3} y={13} fontSize={14} fontWeight="bold" fill="#18d818" fontStyle="italic">A</text><text x={13} y={13} fontSize={14} fontWeight="bold" fill="#fff">TE</text><path d="M4 31c2-8 8-13 18-14" stroke="#18d028" strokeWidth={5} strokeDasharray="8 1" /><path d="M18 23l6-4v3l6-3v8l-6-3v3zM19 30l5-3v7z" fill="#d81818" stroke="#480808" strokeWidth={0.600} /></I>],
  ["Chart", true, <I><circle cx={17} cy={17} r={13.500} fill="#1450a4" stroke="#0c3070" /><path d="M6 12a12 12 0 0122 0c-6-3-16-3-22 0z" fill="#6c9cdc" /><path d="M9 18h3v4H9zM13 16h3v6h-3zM17 14h3v8h-3zM21 11h3v11h-3z" fill="#fff" /></I>],
  ["Stream", true, <I><g fill="#1c3464"><path d="M9 4C0 15 10 31 28 27 14 26 7 16 9 4z" /><path d="M13 3c-5 10 6 22 18 19C20 19 13 12 13 3z" /><path d="M18 3c-2 8 4 15 14 15C24 14 19 10 18 3z" /><path d="M4 12c-2 9 6 20 17 20C11 28 5 21 4 12z" /></g></I>],
  ["MetaTrader", true, <I><g fill="#3898cc"><path d="M13 2h5v5h-5zM13 8h5v5h-5zM7 10h5v5H7zM19 6h5v5h-5zM19 12h5v5h-5zM13 14h5v4h-5zM25 10h4v6h-4zM7 16h5v4H7z" /></g><g fill="#d84c44"><path d="M7 21h5v3H7zM13 19h5v5h-5zM19 19h5v5h-5zM13 25h5v3h-5zM19 25h5v4h-5zM25 19h4v6h-4zM20 30h4v3h-4z" /></g></I>],
  ["Terminal", true, <I><path d="M5 3h22v18H5z" fill="#e8f2fc" stroke="#4880b8" /><path d="M5 3h22v4H5z" fill="#6ca4d8" /><path d="M10 14h22v17H10z" fill="#e8f2fc" stroke="#4880b8" /><path d="M16 26l3-8 3 6 3-9 4 9" stroke="#3878c0" strokeWidth={1.500} /><circle cx={12} cy={17} r={5} fill="#f0c090" /><path d="M7 16c0-7 10-7 10 0-3-2-6-2-10 0z" fill="#b06c20" /><path d="M4 32c0-12 16-12 16 0z" fill="#5cb03c" stroke="#388020" /></I>],
  ["Skype", true, <I><path d="M6 4c3-2 6-2 9-.500C24 2 31 9 29.500 18c2 5 1 9-2 11s-6 2-9 .500C10 31 3 24 4.500 15 3 11 3 7 6 4z" fill="#18a8ec" /><path d="M22 11c-3-4-11-3-11 1 0 6 11 3 11 9 0 5-9 5-12 0" stroke="#fff" strokeWidth={3.500} /><circle cx={27} cy={27} r={6} fill="#f8a820" stroke="#c07010" /><path d="M25.500 25l2-1.500V31" stroke="#402000" strokeWidth={2} /></I>],
  ["Privod", true, <I><rect x={2} y={2} width={30} height={30} rx={2} fill="#1c5ca8" /><path d="M2 2h18C12 8 6 18 2 30z" fill="#48a048" /><path d="M5 31L15 5h6l8 26h-6l-2-6h-8l-3 6zM14 20h6l-2-9z" fill="#fff" fillRule="evenodd" /></I>],
];

function Taskbar() {
  return (
    <footer className="flex h-[39px] items-stretch bg-gradient-to-b from-[#a2bbd6] to-[#a9c1de] font-['Roboto','Noto_Sans',sans-serif]">
      <div className="flex w-[66px] items-center gap-[11px] bg-[#8096ad] pl-1">
        <button aria-label="Start">
          <svg width="37" height="37" viewBox="0 0 37 37"><circle cx={18.500} cy={18.500} r={17.500} fill="#1c5c94" stroke="#2c3c58" /><ellipse cx={18.500} cy={11} rx={14} ry={8.500} fill="#88b8dc" opacity={0.700} /><ellipse cx={18.500} cy={29} rx={11} ry={6} fill="#38c8e8" opacity={0.700} /><path d="M9 11c3-2 6-2 9 0l-2 8c-3-2-6-2-9 0z" fill="#e86024" /><path d="M20 11c3 2 5 2 9 0l-2 8c-3 2-6 2-9 0z" fill="#8cc83c" /><path d="M7 21c3-2 6-2 9 0l-2 7c-3-2-5-2-8 0z" fill="#3c98e0" /><path d="M17.500 21c3 2 6 2 9 0l-2 7c-3 2-6 2-9 0z" fill="#f8c828" /></svg>
        </button>
        <span className="h-[30px] w-[7px] bg-[radial-gradient(#e4ecf4_1px,transparent_1px)] bg-[length:4px_4px]" />
      </div>
      <div className="ml-1 flex gap-[3px]">
        {APPS.map(([name, open, art]) => (
          <button key={name} aria-label={name} className={`flex w-[59px] items-center justify-center rounded-sm ${open ? "border border-[#5c7490] bg-gradient-to-b from-[#c8d8ea] to-[#a4bcda] shadow-[inset_0_0_0_1px_#dce8f4]" : ""}`}>{art}</button>
        ))}
        <span className="-ml-[3px] w-[2px] border-r border-[#5c7490]" /><span className="w-px border-r border-[#7c94b0]" />
      </div>
      <div className="ml-auto w-8 bg-gradient-to-r from-transparent to-[#7e95ae]" />
      <div className="flex items-center bg-[#7e95ae] pl-4 text-white">
        <span className="h-[30px] w-[7px] bg-[radial-gradient(#2c3c50_1px,transparent_1px)] bg-[length:4px_4px]" />
        <span className="ml-[6px] mr-4 pb-1 text-[11px]">EN</span>
        <svg className="mr-[11px]" width="9" height="6" viewBox="0 0 9 6"><path d="M4.500 0L9 6H0z" fill="#fff" /></svg>
        <svg width="17" height="17" viewBox="0 0 17 17"><path d="M2 1v15" stroke="#fff" strokeWidth={2} /><path d="M3 2c4-2 5 2 10 0v8c-5 2-6-2-10 0z" fill="#e8eef4" stroke="#fff" /><circle cx={11.500} cy={12} r={5} fill="#d02c20" /><path d="M9.500 10l4 4M13.500 10l-4 4" stroke="#fff" strokeWidth={1.500} /></svg>
        <svg className="ml-2" width="17" height="17" viewBox="0 0 17 17" fill="none" stroke="#fff" strokeWidth={1.500}><path d="M5 4h11v8H5zM8 15h7M11 12v3M1 1v4h3V1M2.500 5v9h4" /></svg>
        <svg className="ml-2" width="18" height="17" viewBox="0 0 18 17" fill="none" stroke="#fff" strokeWidth={1.200}><path d="M1 6h3l4-4v13l-4-4H1z" fill="#fff" /><path d="M10.500 5.500c1.500 2 1.500 4 0 6M13 3.500c2.500 3 2.500 7 0 10M15.500 2c3 4 3 9 0 13" /></svg>
        <time className="ml-4 mr-3 text-center text-[11px] leading-[17px]">20:13<br />02.11.2012</time>
        <span className="h-full w-[15px] border border-[#50607c] bg-gradient-to-r from-[#5c708c] to-[#a0b0c4]" />
      </div>
    </footer>
  );
}

export default function App() {
  return (
    <div className="flex min-h-screen flex-col overflow-x-hidden bg-white">
      <div className="grid grid-cols-[minmax(0,723fr)_minmax(0,379fr)_minmax(0,813fr)]">
        <LeftApp />
        <BookWindow />
        <MetaTrader />
      </div>
      <Taskbar />
    </div>
  );
}
